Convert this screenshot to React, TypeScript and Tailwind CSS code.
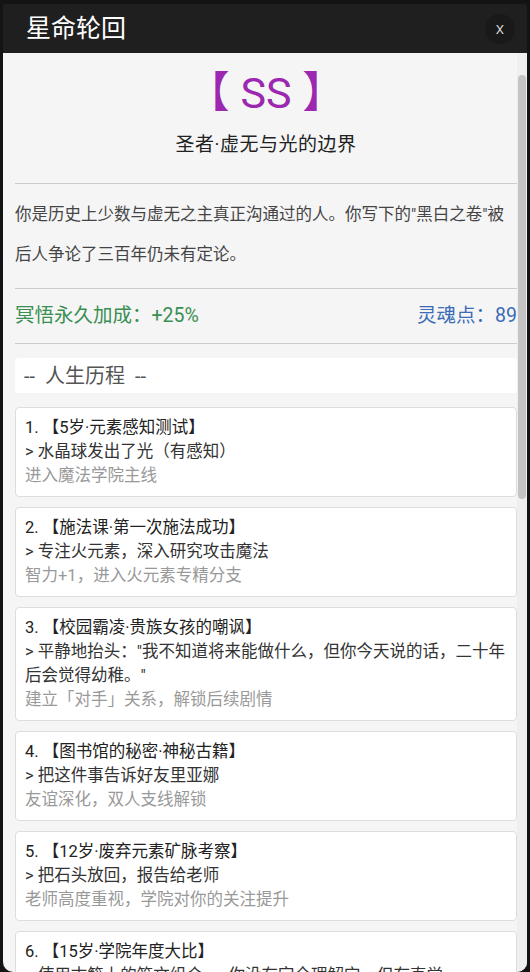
import React from 'react';

type Stage = {
  title: string;
  choice: string;
  result: string;
};

const stages: Stage[] = [
  { title: '【5岁·元素感知测试】', choice: '> 水晶球发出了光（有感知）', result: '进入魔法学院主线' },
  { title: '【施法课·第一次施法成功】', choice: '> 专注火元素，深入研究攻击魔法', result: '智力+1，进入火元素专精分支' },
  {
    title: '【校园霸凌·贵族女孩的嘲讽】',
    choice: '> 平静地抬头："我不知道将来能做什么，但你今天说的话，二十年后会觉得幼稚。"',
    result: '建立「对手」关系，解锁后续剧情',
  },
  { title: '【图书馆的秘密·神秘古籍】', choice: '> 把这件事告诉好友里亚娜', result: '友谊深化，双人支线解锁' },
  { title: '【12岁·废弃元素矿脉考察】', choice: '> 把石头放回，报告给老师', result: '老师高度重视，学院对你的关注提升' },
  {
    title: '【15岁·学院年度大比】',
    choice: '> 使用古籍上的符文组合——你没有完全理解它，但有直觉',
    result: '一战成名，获得学院首席的关注',
  },
];

const font = { fontFamily: 'Roboto, "Noto Sans CJK SC", sans-serif' };

const App: React.FC = () => {
  return (
    <div className="w-[530px] h-[972px] bg-[#141414] pt-[4px] px-[3px] overflow-hidden" style={font}>
      <div className="h-[968px] flex flex-col rounded-t-[3px] rounded-b-[10px] overflow-hidden">
        {/* Header */}
        <div className="h-[49px] shrink-0 bg-[#1f1f1f] flex items-center justify-between pl-[23px] pr-[12px]">
          <span className="text-white text-[25px] leading-none">星命轮回</span>
          <button className="w-[30px] h-[30px] rounded-full bg-[#191919] text-[#f0f0f0] text-[17px] font-light leading-none flex items-center justify-center">
            x
          </button>
        </div>

        {/* Body */}
        <div className="relative flex-1 bg-[#f5f5f5] overflow-hidden">
          <div className="h-full overflow-y-auto [scrollbar-width:none] pl-[12px] pr-[10px] pt-[14px]">
            <div className="text-center text-[#9c27b0] text-[43px] leading-[52px]">【 SS 】</div>
            <div className="mt-[14px] text-center text-[#222] text-[19px] leading-[24px] tracking-[0.5px]">
              圣者·虚无与光的边界
            </div>

            <div className="mt-[26px] border-t border-[#cccccc]" />

            <p className="pt-[11px] pb-[13px] text-[16.5px] leading-[40px] text-[#444]">
              你是历史上少数与虚无之主真正沟通过的人。你写下的"黑白之卷"被后人争论了三百年仍未有定论。
            </p>

            <div className="border-t border-[#cccccc]" />

            <div className="flex items-center justify-between py-[15px] text-[19.5px] leading-[24px]">
              <span className="text-[#3a8f52]">冥悟永久加成：+25%</span>
              <span className="text-[#3b6cb5]">灵魂点：89</span>
            </div>

            <div className="border-t border-[#cccccc]" />

            <div className="mt-[14px] h-[35px] bg-white rounded-[3px] flex items-center pl-[9px] text-[20px] text-[#555] whitespace-pre">
              {'--  人生历程  --'}
            </div>

            <div className="mt-[14px] flex flex-col gap-[10px] pb-[20px]">
              {stages.map((s, i) => (
                <div
                  key={i}
                  className="bg-white border border-[#dddddd] rounded-[4px] px-[9px] py-[8px] text-[16.5px] leading-[24px]"
                >
                  <div className="text-[#222]">
                    {i + 1}. {s.title}
                  </div>
                  <div className="text-[#333]">{s.choice}</div>
                  <div className="text-[#999]">{s.result}</div>
                </div>
              ))}
            </div>
          </div>

          {/* scrollbar */}
          <div className="absolute top-0 right-0 w-[10px] h-full bg-[#efefef]" />
          <div className="absolute top-[22px] right-[1px] w-[8px] h-[424px] rounded-full bg-[#c4c4c4]" />
        </div>
      </div>
    </div>
  );
};

export default App;
